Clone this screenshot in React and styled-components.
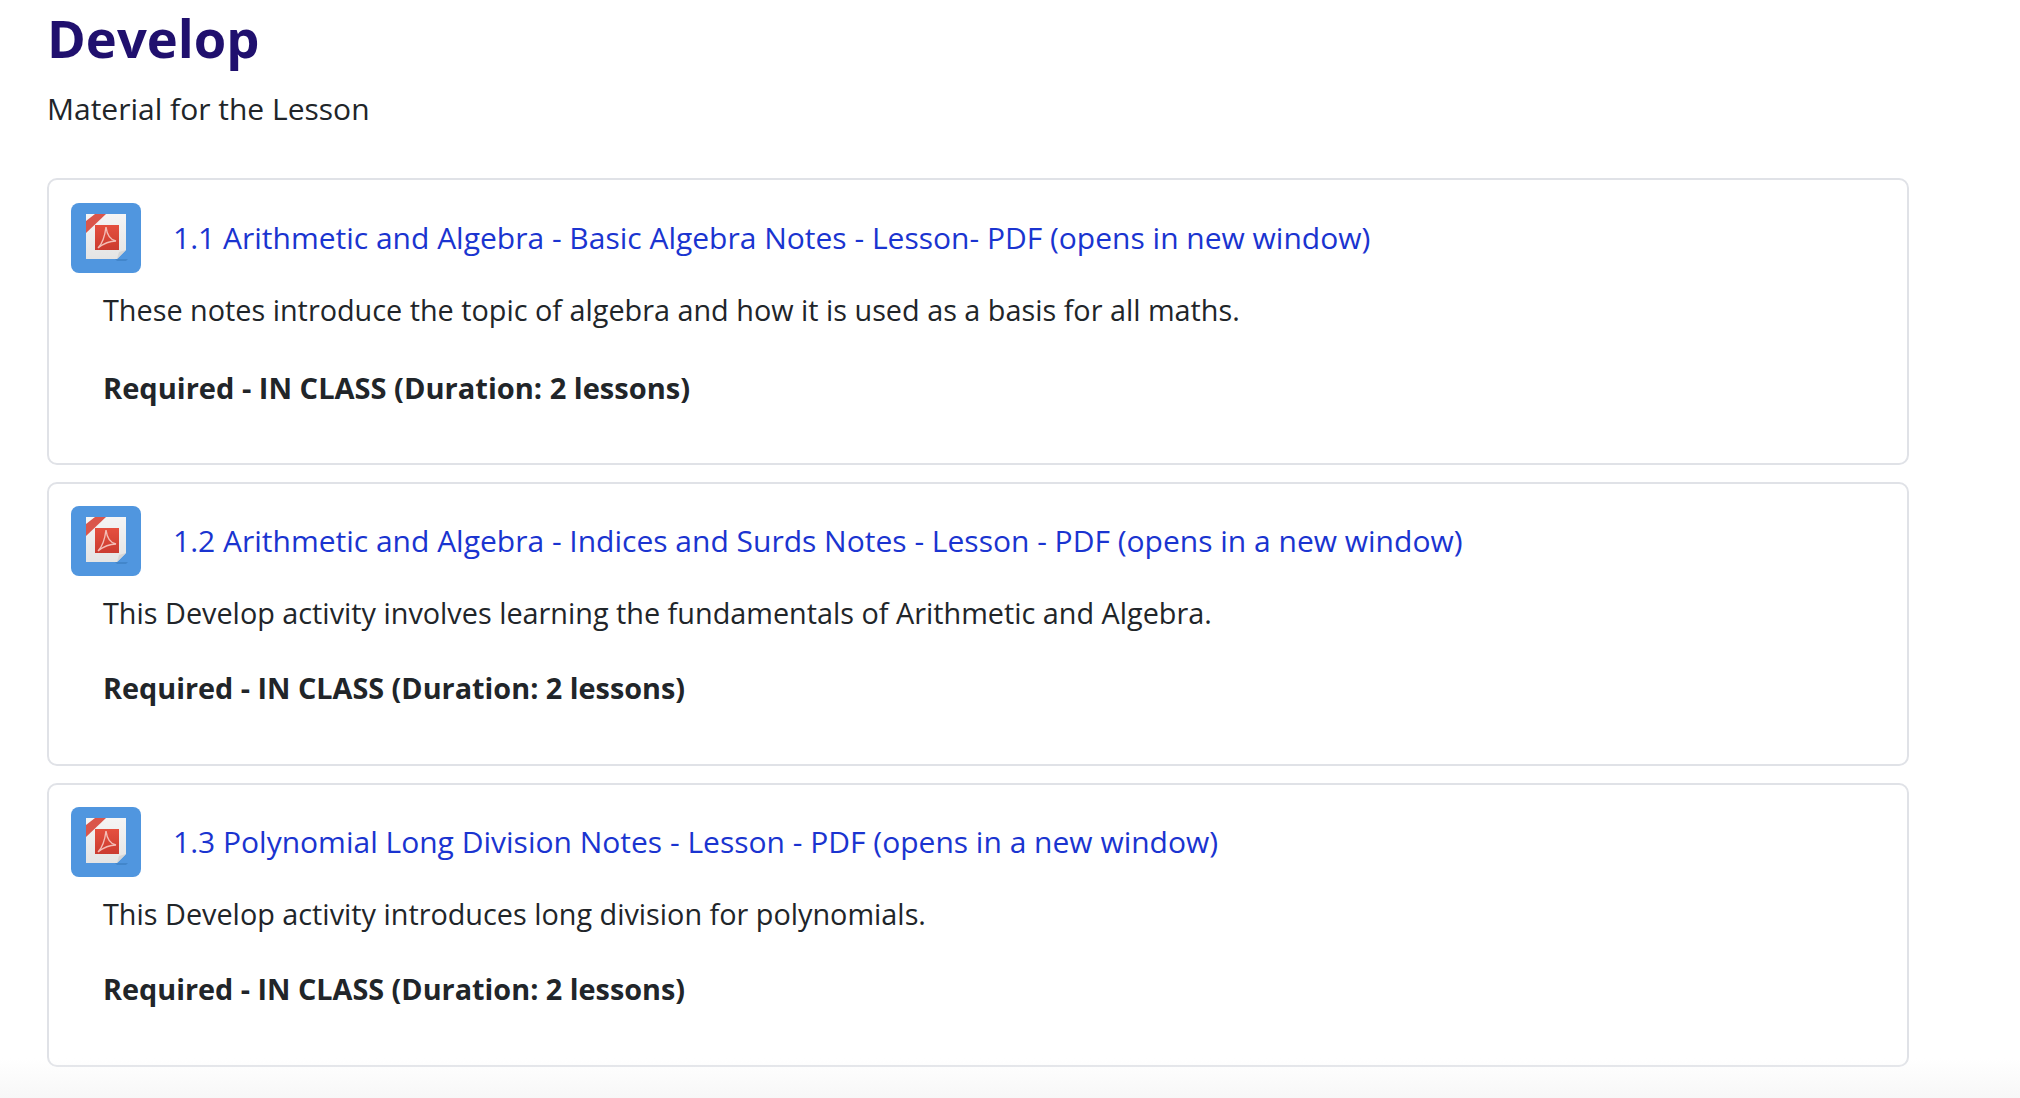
import React from "react";
import styled, { createGlobalStyle } from "styled-components";

const GlobalStyle = createGlobalStyle`
  html, body {
    margin: 0;
    padding: 0;
    background: #ffffff;
    font-family: "Open Sans", "Liberation Sans", sans-serif;
    color: #212529;
  }
`;

const Page = styled.div`
  width: 2020px;
  height: 1098px;
  box-sizing: border-box;
  padding: 0 111px 0 47px;
  overflow: hidden;
  position: relative;
`;

const Heading = styled.h1`
  margin: 0;
  padding-top: 6px;
  font-size: 52.5px;
  line-height: 64px;
  font-weight: 700;
  color: #20106e;
`;

const Intro = styled.p`
  margin: 19px 0 0;
  font-size: 30px;
  line-height: 40px;
  color: #212529;
`;

const CardList = styled.div`
  display: flex;
  flex-direction: column;
  gap: 17px;
  margin-top: 49px;
`;

const Card = styled.section`
  height: ${({ $height }) => $height}px;
  box-sizing: border-box;
  padding: ${({ $top }) => $top}px 22px 0;
  border: 2px solid #e0e2e7;
  border-radius: 10px;
  background: #ffffff;
`;

const TitleRow = styled.div`
  display: flex;
  align-items: center;
  gap: 32px;
`;

const IconTile = styled.div`
  flex: none;
  width: 70px;
  height: 70px;
  border-radius: 8px;
  background: #5096df;
`;

const LessonLink = styled.a`
  font-size: 30px;
  line-height: 40px;
  color: #1a34d0;
  text-decoration: none;
`;

const Body = styled.div`
  padding-left: 32px;
`;

const Description = styled.p`
  margin: 17px 0 0;
  font-size: 28.8px;
  line-height: 40px;
  color: #212529;
`;

const Requirement = styled.p`
  margin: ${({ $gap }) => $gap}px 0 0;
  font-size: ${({ $size }) => $size}px;
  line-height: 40px;
  font-weight: 700;
  color: #212529;
`;

const BottomFade = styled.div`
  position: absolute;
  left: 0;
  right: 0;
  bottom: 0;
  height: 40px;
  background: linear-gradient(to bottom, rgba(247, 247, 247, 0), rgba(247, 247, 247, 1));
  pointer-events: none;
`;

function PdfIcon({ id }) {
  return (
    <svg width="70" height="70" viewBox="0 0 70 70" style={{ display: "block" }}>
      <defs>
        <filter id={`soft-${id}`} x="-10%" y="-10%" width="120%" height="120%">
          <feGaussianBlur stdDeviation="0.6" />
        </filter>
        <linearGradient id={`sheet-${id}`} x1="0" y1="0" x2="0" y2="1">
          <stop offset="0" stopColor="#f5f5f5" />
          <stop offset="1" stopColor="#e4e4e4" />
        </linearGradient>
        <linearGradient id={`red-${id}`} x1="0" y1="0" x2="0" y2="1">
          <stop offset="0" stopColor="#e5503f" />
          <stop offset="1" stopColor="#cb3b2f" />
        </linearGradient>
      </defs>
      <g filter={`url(#soft-${id})`}>
        <path d="M44 56H57L55 58H46Z" fill="#4386cb" />
        <path d="M15 11H55V47L46 56H15Z" fill={`url(#sheet-${id})`} />
        <path d="M46 56L48 49L55 47Z" fill="#d6d6d6" />
        <path d="M15 18V30L35 11H24Z" fill="#da564c" />
        <rect x="24" y="22" width="24" height="25" fill={`url(#red-${id})`} />
        <path
          d="M35 24C34 32 32 40 27 45C32 41 38 38 45 38C40 37 36 32 35 24Z"
          fill="none"
          stroke="#f3bdb6"
          strokeWidth="1.4"
        />
      </g>
    </svg>
  );
}

const lessons = [
  {
    id: "a",
    title: "1.1 Arithmetic and Algebra - Basic Algebra Notes - Lesson- PDF (opens in new window)",
    text: "These notes introduce the topic of algebra and how it is used as a basis for all maths.",
    required: "Required - IN CLASS (Duration: 2 lessons)",
    height: 287,
    top: 23,
    gap: 38,
    size: 29.05,
  },
  {
    id: "b",
    title: "1.2 Arithmetic and Algebra - Indices and Surds Notes - Lesson - PDF (opens in a new window)",
    text: "This Develop activity involves learning the fundamentals of Arithmetic and Algebra.",
    required: "Required - IN CLASS (Duration: 2 lessons)",
    height: 284,
    top: 22,
    gap: 35,
    size: 28.8,
  },
  {
    id: "c",
    title: "1.3 Polynomial Long Division Notes - Lesson - PDF (opens in a new window)",
    text: "This Develop activity introduces long division for polynomials.",
    required: "Required - IN CLASS (Duration: 2 lessons)",
    height: 284,
    top: 22,
    gap: 35,
    size: 28.8,
  },
];

export default function App() {
  return (
    <Page>
      <GlobalStyle />
      <Heading>Develop</Heading>
      <Intro>Material for the Lesson</Intro>
      <CardList>
        {lessons.map((lesson) => (
          <Card key={lesson.id} $height={lesson.height} $top={lesson.top}>
            <TitleRow>
              <IconTile>
                <PdfIcon id={lesson.id} />
              </IconTile>
              <LessonLink href="#">{lesson.title}</LessonLink>
            </TitleRow>
            <Body>
              <Description>{lesson.text}</Description>
              <Requirement $gap={lesson.gap} $size={lesson.size}>
                {lesson.required}
              </Requirement>
            </Body>
          </Card>
        ))}
      </CardList>
      <BottomFade />
    </Page>
  );
}
